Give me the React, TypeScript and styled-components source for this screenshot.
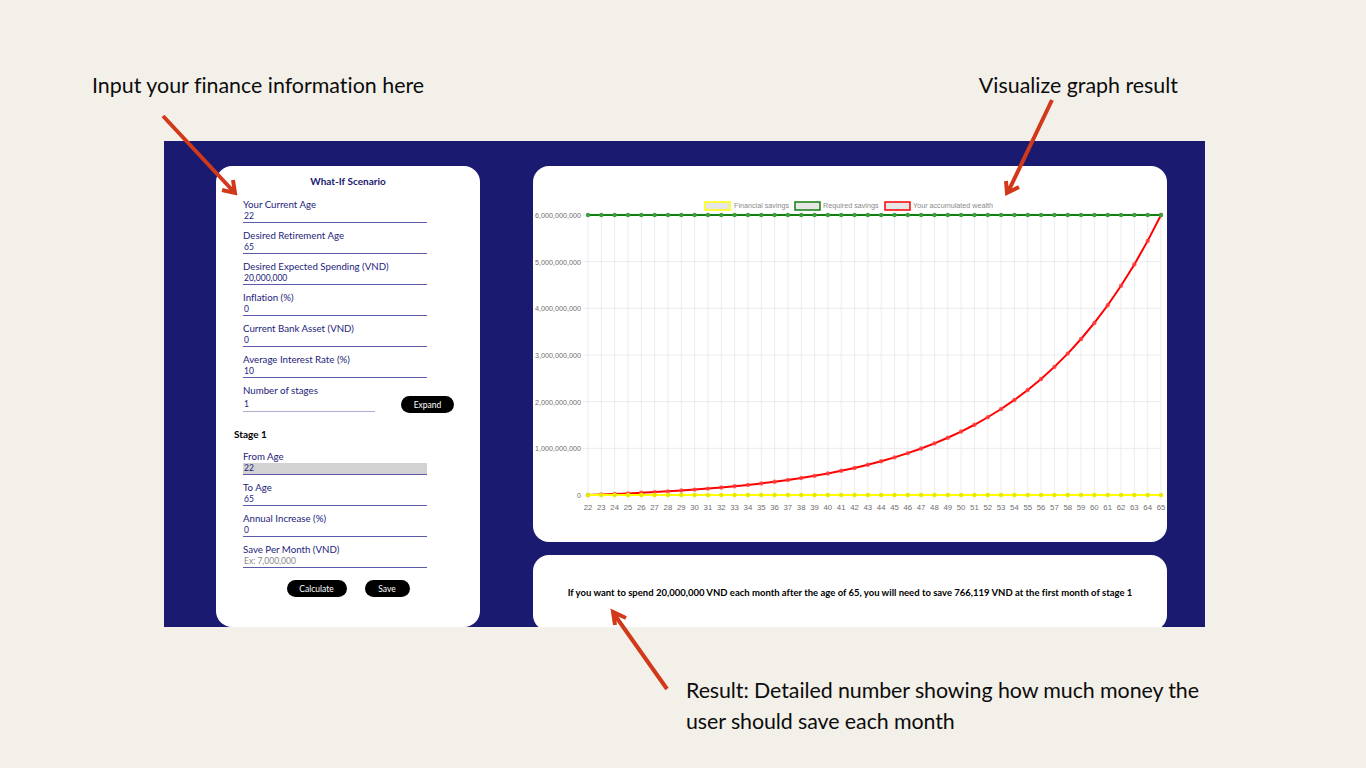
import styled, { createGlobalStyle } from 'styled-components'

const LEFT = 55
const RIGHT = 628
const TOP = 49
const BOTTOM = 329
const AGES = Array.from({ length: 44 }, (_, i) => 22 + i)
const TICKS = [0, 1, 2, 3, 4, 5, 6]

const xAt = (i: number) => LEFT + ((RIGHT - LEFT) * i) / 43
const yAt = (billions: number) => BOTTOM - ((BOTTOM - TOP) * billions) / 6
const wealthAt = (i: number) => (6 * (Math.pow(1.1, i) - 1)) / (Math.pow(1.1, 43) - 1)

const LEGEND = [
  { label: 'Financial savings', color: '#ffff00', box: 172, text: 201 },
  { label: 'Required savings', color: '#118011', box: 262, text: 290 },
  { label: 'Your accumulated wealth', color: '#ff0000', box: 352, text: 380 },
]

const SERIES = [
  { color: '#ff0000', dot: 'rgba(255, 60, 60, 0.8)', value: wealthAt },
  { color: '#118011', dot: '#3f9e3f', value: () => 6 },
  { color: '#ffff00', dot: '#e8e800', value: () => 0 },
]

const Chart = () => (
  <svg width="634" height="376" viewBox="0 0 634 376">
    {TICKS.map((t) => (
      <g key={t}>
        <GridLine x1={LEFT - 5} x2={RIGHT} y1={yAt(t)} y2={yAt(t)} />
        <AxisText x={LEFT - 7} y={yAt(t) + 3} textAnchor="end">
          {(t * 1000000000).toLocaleString('en-US')}
        </AxisText>
      </g>
    ))}
    {AGES.map((age, i) => (
      <g key={age}>
        <GridLine x1={xAt(i)} x2={xAt(i)} y1={TOP} y2={BOTTOM + 5} />
        <AgeText x={xAt(i)} y={344} textAnchor="middle">
          {age}
        </AgeText>
      </g>
    ))}
    {LEGEND.map((item) => (
      <g key={item.label}>
        <rect x={item.box} y={36} width={25} height={8} fill="#e6e6e6" stroke={item.color} strokeWidth="1.5" />
        <LegendText x={item.text} y={42}>
          {item.label}
        </LegendText>
      </g>
    ))}
    {SERIES.map((s) => (
      <g key={s.color}>
        <polyline
          fill="none"
          stroke={s.color}
          strokeWidth="2"
          points={AGES.map((_, i) => `${xAt(i)},${yAt(s.value(i))}`).join(' ')}
        />
        {AGES.map((age, i) => (
          <circle key={age} cx={xAt(i)} cy={yAt(s.value(i))} r="2.2" fill={s.dot} />
        ))}
      </g>
    ))}
  </svg>
)

const Arrow = ({ d }: { d: string }) => <path d={d} fill="none" stroke="#d2381a" strokeWidth="4" />

const Arrows = () => (
  <ArrowLayer width="1366" height="768" viewBox="0 0 1366 768">
    <Arrow d="M163 116 L234 192 M222 190 L235 193 L233 180" />
    <Arrow d="M1052 100 L1008 192 M1006 181 L1007 193 L1019 187" />
    <Arrow d="M667 689 L614 614 M626 618 L613 612 L615 625" />
  </ArrowLayer>
)

const Field = ({ label, value, placeholder, disabled }: FieldProps) => (
  <FieldBox>
    <FieldLabel>{label}</FieldLabel>
    <FieldInput readOnly defaultValue={value} placeholder={placeholder} disabled={disabled} />
  </FieldBox>
)

type FieldProps = {
  label: string
  value?: string
  placeholder?: string
  disabled?: boolean
}

export default function App() {
  return (
    <Page>
      <GlobalStyle />
      <TopCaptions>
        <Caption>Input your finance information here</Caption>
        <Caption>Visualize graph result</Caption>
      </TopCaptions>
      <Panel>
        <FormCard>
          <FormTitle>What-If Scenario</FormTitle>
          <Fields>
            <Field label="Your Current Age" value="22" />
            <Field label="Desired Retirement Age" value="65" />
            <Field label="Desired Expected Spending (VND)" value="20,000,000" />
            <Field label="Inflation (%)" value="0" />
            <Field label="Current Bank Asset (VND)" value="0" />
            <Field label="Average Interest Rate (%)" value="10" />
            <StagesRow>
              <StagesField>
                <FieldLabel>Number of stages</FieldLabel>
                <StagesInput readOnly defaultValue="1" />
              </StagesField>
              <ExpandButton>Expand</ExpandButton>
            </StagesRow>
          </Fields>
          <StageTitle>Stage 1</StageTitle>
          <Fields>
            <Field label="From Age" value="22" disabled />
            <Field label="To Age" value="65" />
            <Field label="Annual Increase (%)" value="0" />
            <Field label="Save Per Month (VND)" placeholder="Ex: 7,000,000" />
          </Fields>
          <Actions>
            <PillButton $width={60}>Calculate</PillButton>
            <PillButton $width={45}>Save</PillButton>
          </Actions>
        </FormCard>
        <RightColumn>
          <ChartCard>
            <Chart />
          </ChartCard>
          <ResultCard>
            If you want to spend 20,000,000 VND each month after the age of 65, you will need to save 766,119 VND at the
            first month of stage 1
          </ResultCard>
        </RightColumn>
      </Panel>
      <BottomCaption>
        Result: Detailed number showing how much money the
        <br />
        user should save each month
      </BottomCaption>
      <Arrows />
    </Page>
  )
}

const GlobalStyle = createGlobalStyle`
  html, body {
    margin: 0;
    padding: 0;
  }
  body {
    background: #f3f0e9;
    font-family: Lato, "Open Sans", sans-serif;
    font-variant-ligatures: none;
  }
`
const Page = styled.div`
  position: relative;
  width: 1366px;
  height: 768px;
  overflow: hidden;
  background: #f3f0e9;
`
const TopCaptions = styled.div`
  display: flex;
  justify-content: space-between;
  height: 141px;
  padding: 70px 188px 0 92px;
  box-sizing: border-box;
`
const Caption = styled.div`
  font-size: 21.4px;
  line-height: 31px;
  color: #0c0c0c;
`
const Panel = styled.div`
  display: flex;
  width: 1041px;
  height: 486px;
  margin-left: 164px;
  padding: 25px 38px 0 52px;
  box-sizing: border-box;
  gap: 53px;
  overflow: hidden;
  background: #1a1a70;
`
const FormCard = styled.div`
  width: 264px;
  height: 461px;
  padding: 9px 0 0 18px;
  box-sizing: border-box;
  flex-shrink: 0;
  border-radius: 16px;
  background: #fff;
`
const FormTitle = styled.div`
  margin: 0 0 10px -18px;
  font-size: 10px;
  font-weight: 700;
  line-height: 12px;
  text-align: center;
  color: #1a1a70;
`
const Fields = styled.div`
  display: flex;
  flex-direction: column;
  gap: 5px;
  padding-left: 9px;
`
const FieldBox = styled.div`
  display: flex;
  flex-direction: column;
  width: 184px;
`
const FieldLabel = styled.div`
  height: 14px;
  font-size: 9.7px;
  line-height: 14px;
  white-space: nowrap;
  color: #23237a;
`
const FieldInput = styled.input`
  width: 100%;
  height: 12px;
  margin: 0;
  padding: 0 0 1px 1px;
  box-sizing: border-box;
  border: 0;
  border-bottom: 1px solid #5a5aa6;
  outline: none;
  font-family: inherit;
  font-size: 8.5px;
  color: #23237a;
  background: #fff;

  &:disabled {
    background: #d2d2d2;
    color: #23237a;
  }
  &::placeholder {
    color: #8a8a8a;
  }
`
const StagesRow = styled.div`
  display: flex;
  align-items: flex-end;
  gap: 26px;
`
const StagesField = styled(FieldBox)`
  width: 132px;
`
const StagesInput = styled(FieldInput)`
  height: 15px;
  border-bottom-color: #aeaed2;
`
const ExpandButton = styled.button`
  width: 53px;
  height: 17px;
  margin-bottom: -1px;
  padding: 0;
  border: 0;
  border-radius: 9px;
  font-family: inherit;
  font-size: 8.5px;
  color: #fff;
  background: #000;
`
const StageTitle = styled.div`
  margin: 15px 0 8px;
  font-size: 10px;
  font-weight: 700;
  line-height: 14px;
  color: #000;
`
const Actions = styled.div`
  display: flex;
  justify-content: center;
  gap: 18px;
  width: 264px;
  margin: 12px 0 0 -18px;
`
const PillButton = styled.button<{ $width: number }>`
  width: ${({ $width }) => $width}px;
  height: 17px;
  padding: 0;
  border: 0;
  border-radius: 9px;
  font-family: inherit;
  font-size: 8.5px;
  color: #fff;
  background: #000;
`
const RightColumn = styled.div`
  display: flex;
  flex-direction: column;
  gap: 13px;
  width: 634px;
`
const ChartCard = styled.div`
  height: 376px;
  flex-shrink: 0;
  border-radius: 16px;
  background: #fff;

  svg {
    display: block;
  }
`
const ResultCard = styled.div`
  display: flex;
  justify-content: center;
  height: 76px;
  padding-top: 31px;
  box-sizing: border-box;
  flex-shrink: 0;
  border-radius: 16px;
  font-size: 9.5px;
  font-weight: 700;
  line-height: 13px;
  white-space: nowrap;
  color: #000;
  background: #fff;
`
const BottomCaption = styled(Caption)`
  margin: 48px 0 0 686px;
  letter-spacing: -0.08px;
`
const ArrowLayer = styled.svg`
  position: absolute;
  top: 0;
  left: 0;
  pointer-events: none;
`
const GridLine = styled.line`
  stroke: #ececec;
  stroke-width: 1;
`
const AxisText = styled.text`
  font-family: 'Liberation Sans', Arial, sans-serif;
  font-size: 7.2px;
  fill: #6f6f6f;
`
const AgeText = styled(AxisText)`
  font-size: 7.8px;
`
const LegendText = styled.text`
  font-family: 'Liberation Sans', Arial, sans-serif;
  font-size: 7.2px;
  fill: #8a8a8a;
`
